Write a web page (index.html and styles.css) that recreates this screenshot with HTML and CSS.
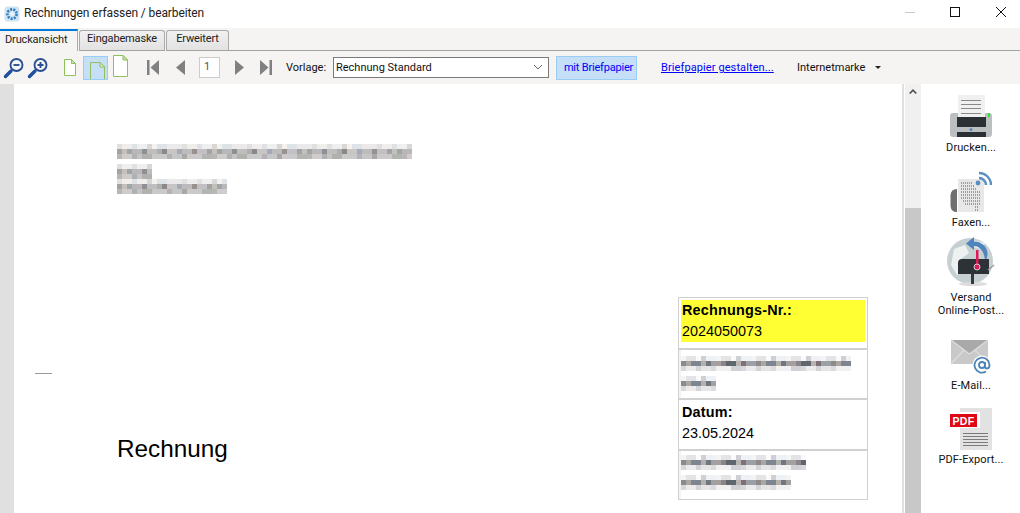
FILE: index.html
```html
<!DOCTYPE html>
<html lang="de">
<head>
<meta charset="utf-8">
<title>Rechnungen erfassen / bearbeiten</title>
<link rel="stylesheet" href="styles.css">
</head>
<body>
<div class="app">
  <header class="titlebar">
    <svg class="app-icon" viewBox="0 0 16 16" width="16" height="16">
      <rect x="0.5" y="0.5" width="15" height="15" rx="3" fill="#cfe3f2"/>
      <circle cx="8" cy="8" r="4.6" fill="none" stroke="#2f7fc0" stroke-width="2.6" stroke-dasharray="2 1.2"/>
      <circle cx="8" cy="8" r="2" fill="#eaf4fb"/>
    </svg>
    <span class="title-text">Rechnungen erfassen / bearbeiten</span>
    <div class="win-controls">
      <svg class="win-min" viewBox="0 0 10 10" width="10" height="10"><path d="M0 5.5H10" stroke="#c8c8c8" fill="none"/></svg>
      <svg class="win-max" viewBox="0 0 10 10" width="10" height="10"><rect x="0.5" y="0.5" width="9" height="9" fill="none" stroke="#111"/></svg>
      <svg class="win-close" viewBox="0 0 10 10" width="10" height="10"><path d="M0 0L10 10M10 0L0 10" stroke="#111" fill="none"/></svg>
    </div>
  </header>

  <nav class="tabs">
    <div class="tab tab-active">Druckansicht</div>
    <div class="tab tab-second">Eingabemaske</div>
    <div class="tab tab-third">Erweitert</div>
    <div class="tab-rest"></div>
  </nav>

  <div class="toolbar">
    <svg class="t-zoomout" viewBox="0 0 22 22" width="22" height="22">
      <path d="M2.500 19.500L8 14" stroke="#1f4f9e" stroke-width="3.400" stroke-linecap="round"/>
      <circle cx="13.500" cy="8" r="6" fill="#f4f6fa" stroke="#2a4f91" stroke-width="1.900"/>
      <path d="M10.500 8H16.500" stroke="#2a4f91" stroke-width="1.900"/>
    </svg>
    <svg class="t-zoomin" viewBox="0 0 22 22" width="22" height="22">
      <path d="M2.500 19.500L8 14" stroke="#1f4f9e" stroke-width="3.400" stroke-linecap="round"/>
      <circle cx="13.500" cy="8" r="6" fill="#f4f6fa" stroke="#2a4f91" stroke-width="1.900"/>
      <path d="M10.500 8H16.500M13.500 5V11" stroke="#2a4f91" stroke-width="1.900"/>
    </svg>
    <svg class="t-page1" viewBox="0 0 12 17" width="12" height="17">
      <path d="M0.500 0.500H7.500L11.500 4.500V16.500H0.500Z" fill="#fff" stroke="#8fc05c"/>
      <path d="M7.500 0.500V4.500H11.500Z" fill="#cfe3b4" stroke="#8fc05c"/>
    </svg>
    <div class="t-pagebtn">
      <svg viewBox="0 0 15 19" width="15" height="19">
        <path d="M0.500 19V0.500H10L14.500 5V19" fill="#c5dff6" stroke="#8fc05c"/>
        <path d="M10 0.500V5H14.500Z" fill="#e4eccf" stroke="#8fc05c"/>
      </svg>
    </div>
    <svg class="t-page3" viewBox="0 0 15 22" width="15" height="22">
      <path d="M0.500 0.500H10L14.500 5V21.500H0.500Z" fill="#fff" stroke="#8fc05c"/>
      <path d="M10 0.500V5H14.500Z" fill="#cfe3b4" stroke="#8fc05c"/>
    </svg>
    <svg class="t-first" viewBox="0 0 12 15" width="12" height="15"><path d="M0 0H2.500V15H0ZM12 0V15L3.500 7.500Z" fill="#808080"/></svg>
    <svg class="t-prev" viewBox="0 0 9 15" width="9" height="15"><path d="M9 0V15L0 7.500Z" fill="#808080"/></svg>
    <div class="t-input">1</div>
    <svg class="t-next" viewBox="0 0 9 15" width="9" height="15"><path d="M0 0V15L9 7.500Z" fill="#808080"/></svg>
    <svg class="t-last" viewBox="0 0 12 15" width="12" height="15"><path d="M0 0V15L8.500 7.500ZM9.500 0H12V15H9.500Z" fill="#808080"/></svg>
    <span class="t-label">Vorlage:</span>
    <div class="t-select">
      <span>Rechnung Standard</span>
      <svg viewBox="0 0 10 6" width="10" height="6"><path d="M1 1L5 5L9 1" fill="none" stroke="#666"/></svg>
    </div>
    <div class="t-btn">mit Briefpapier</div>
    <a class="t-link" href="#">Briefpapier gestalten...</a>
    <span class="t-menu">Internetmarke</span>
    <svg class="t-caret" viewBox="0 0 6 3" width="6" height="3"><path d="M0 0H6L3 3Z" fill="#222"/></svg>
  </div>

  <main class="main">
    <div class="gutter"></div>
    <section class="page">
      <div class="letter">
        <div class="address">
          <div class="blur w295"></div>
          <div class="blur w35 gap5"></div>
          <div class="blur w110"></div>
        </div>
        <div class="fold"></div>
        <h1 class="doc-title">Rechnung</h1>
      </div>
      <div class="meta">
        <div class="meta-row">
          <div class="meta-hl"><b>Rechnungs-Nr.:</b><br>2024050073</div>
        </div>
        <div class="meta-row meta-blur">
          <div class="blur dark w170"></div>
          <div class="blur dark w35 gap5"></div>
        </div>
        <div class="meta-row meta-date"><b>Datum:</b><br>23.05.2024</div>
        <div class="meta-row meta-blur meta-blur-last">
          <div class="blur dark w125"></div>
          <div class="blur dark w110 gap5"></div>
        </div>
      </div>
    </section>
    <div class="divider"></div>
    <div class="scrollbar">
      <svg viewBox="0 0 8 5" width="8" height="5"><path d="M0.700 4.500L4 1.200L7.300 4.500" fill="none" stroke="#505050" stroke-width="1.600"/></svg>
      <div class="thumb"></div>
    </div>
    <aside class="side">
      <div class="side-item item-print">
        <svg viewBox="0 0 42 44" width="42" height="44">
          <rect x="8" y="1" width="27" height="23" fill="#f0f0f0"/>
          <path d="M11 6.500H31M11 10.500H31M11 14.500H31M11 19.500H31" stroke="#8a8a8a"/>
          <path d="M3 19H8V24H35V19H39Q42 19 42 22V40Q42 43 39 43H3Q0 43 0 40V22Q0 19 3 19Z" fill="#bcbfc0"/>
          <rect x="7" y="23" width="29" height="10" fill="#2b3034"/>
          <rect x="38" y="19" width="2" height="4" fill="#2ee62e"/>
          <rect x="7" y="38" width="29" height="5" fill="#2b3034"/>
          <circle cx="21" cy="35.500" r="1.500" fill="#5a86b5"/>
        </svg>
        <span>Drucken...</span>
      </div>
      <div class="side-item item-fax">
        <svg viewBox="0 0 42 43" width="42" height="43">
          <rect x="8" y="9" width="26" height="33" fill="#e8e8e8"/>
          <path d="M7 19Q1 19 0.500 25V36Q1 42 7 42Z" fill="#6e6e6e"/>
          <path d="M11 13H22M11 16H24M11 19H26M11 22H31M11 25H31M11 28H31M13 31H31M15 34H31M25 37H29M25 40H28" stroke="#555" stroke-dasharray="1 1" fill="none"/>
          <circle cx="28" cy="13" r="2.400" fill="#5a8dc0"/>
          <path d="M28 7A7 7 0 0 1 35 14M28 2A12 12 0 0 1 40 14" transform="translate(1 1)" fill="none" stroke="#5a8dc0" stroke-width="2.400"/>
        </svg>
        <span>Faxen...</span>
      </div>
      <div class="side-item item-post">
        <svg viewBox="0 0 48 50" width="48" height="50">
          <circle cx="23" cy="24" r="23" fill="#c6d0d2"/>
          <path d="M7 12L18 8L22 16L14 22L18 32L10 38L4 28Z" fill="#eef1f1"/>
          <path d="M24 3L38 6L34 12L26 10Z" fill="#eef1f1"/>
          <path d="M38 25C38 14 32 9 27 9V13L19 6.500L27 0V4.500C36 4.500 45 13 38 25Z" fill="#4f84bd"/>
          <ellipse cx="26" cy="47" rx="14" ry="2" fill="#dcdcdc"/>
          <rect x="24" y="37" width="3" height="10" fill="#333a3e"/>
          <path d="M11 26Q11 22 15 22H42V37H11Z" fill="#2d3236"/>
          <path d="M41 33L47 28" stroke="#9a9a9a" stroke-width="1.500"/>
          <rect x="29" y="13" width="2.500" height="15" fill="#e0185a"/>
          <circle cx="30" cy="30" r="3" fill="#e0185a" stroke="#d0d0d0"/>
        </svg>
        <span>Versand<br>Online-Post...</span>
      </div>
      <div class="side-item item-mail">
        <svg viewBox="0 0 42 36" width="42" height="36">
          <rect x="1" y="1" width="37" height="24" fill="#c9c9c9"/>
          <path d="M1 1L19.500 15L38 1Z" fill="#a9a9a9"/>
          <path d="M1 1L19.500 15L38 1M1 25L14 11M38 25L25 11" fill="none" stroke="#dedede" stroke-width="1.200"/>
          <circle cx="32" cy="26" r="9.500" fill="#fff"/>
          <circle cx="32" cy="26" r="3" fill="none" stroke="#4d84b8" stroke-width="1.800"/>
          <path d="M35 23V27.500Q35 29.500 37 29.500Q39.500 29.500 39.500 26A7.500 7.500 0 1 0 36 32.500" fill="none" stroke="#4d84b8" stroke-width="1.800"/>
        </svg>
        <span>E-Mail...</span>
      </div>
      <div class="side-item item-pdf">
        <svg viewBox="0 0 42 43" width="42" height="43">
          <rect x="10" y="1" width="32" height="42" fill="#e2e2e2"/>
          <rect x="0" y="5" width="30" height="16" fill="#fff"/>
          <rect x="0" y="7" width="27" height="13" fill="#e00814"/>
          <text x="13.500" y="17.500" class="pdf-text" text-anchor="middle">PDF</text>
          <path d="M13 26.500H38M13 29.500H38M13 32.500H38M13 35.500H38M13 38.500H38" stroke="#7b7b7b"/>
        </svg>
        <span>PDF-Export...</span>
      </div>
    </aside>
  </main>
</div>
</body>
</html>
```

FILE: styles.css
```css
* { box-sizing: border-box; }
html, body { margin: 0; padding: 0; }
body {
  width: 1020px;
  height: 513px;
  overflow: hidden;
  background: #fff;
  font-family: Roboto, "Liberation Sans", sans-serif;
  font-size: 11px;
  color: #111;
}
.app { display: flex; flex-direction: column; height: 513px; }

/* title bar */
.titlebar { display: flex; align-items: center; height: 28px; padding-left: 4px; flex: none; background: #fff; }
.app-icon { flex: none; margin-top: -1px; }
.title-text { margin-left: 4px; font-size: 12px; letter-spacing: -.1px; margin-top: -2px; color: #222; }
.win-controls { display: flex; margin-left: auto; margin-top: -4px; }
.win-controls svg { display: block; }
.win-min { margin-right: 35px; }
.win-max { margin-right: 36px; }
.win-close { margin-right: 14px; }

/* tabs */
.tabs { display: flex; align-items: flex-end; height: 23px; flex: none; background: #f5f4f2; }
.tab {
  height: 20px;
  margin-bottom: 1px;
  padding-top: 1px;
  text-align: center;
  font-size: 11px;
  letter-spacing: -.15px;
  color: #222;
  border: 1px solid #aaa;
  border-bottom: 0;
  border-radius: 3px 3px 0 0;
  background: linear-gradient(#f1f1f1, #e2e2e2);
}
.tab-active {
  width: 78px;
  height: 22px;
  margin-bottom: 0;
  padding: 2px 0 0 5px;
  text-align: left;
  border: 0;
  border-top: 2px solid #0078d7;
  border-right: 1px solid #aaa;
  border-radius: 0;
  background: #f5f4f2;
}
.tab-second { width: 86px; margin-left: 1px; }
.tab-third { width: 63px; margin-left: 1px; }
.tab-rest { flex: 1; align-self: flex-end; height: 1px; background: #a3a3a3; }
.tab-second, .tab-third { box-shadow: 0 1px 0 #a3a3a3; }

/* toolbar */
.toolbar { display: flex; align-items: center; height: 33px; flex: none; background: #f5f4f2; font-size: 11px; }
.toolbar > svg { flex: none; display: block; }
.t-zoomout { margin-left: 3px; }
.t-zoomin { margin-left: 2px; }
.t-page1 { margin-left: 15px; }
.t-pagebtn {
  width: 25px; height: 24px; margin-left: 7px; flex: none;
  background: #c5dff6; border: 1px solid #99cdf5;
  padding: 5px 0 0 6px; overflow: hidden;
}
.t-pagebtn svg { display: block; }
.t-page3 { margin-left: 5px; margin-top: -3px; }
.t-first { margin-left: 19px; }
.t-prev { margin-left: 17px; }
.t-input {
  width: 21px; height: 21px; margin-left: 14px; flex: none;
  background: #fff; border: 1px solid #ccc;
  padding: 2px 0 0 4px; color: #555;
}
.t-next { margin-left: 15px; }
.t-last { margin-left: 16px; }
.t-label { width: 40px; margin-left: 14px; flex: none; white-space: nowrap; }
.t-select {
  display: flex; align-items: center; justify-content: space-between;
  width: 216px; height: 21px; margin-left: 7px; flex: none;
  background: #fff; border: 1px solid #7a7a7a;
  padding: 0 5px 1px 2px;
}
.t-btn {
  width: 81px; height: 24px; margin-left: 7px; flex: none;
  background: #c5dff6; border: 1px solid #99cdf5;
  color: #0000ff; text-align: center; line-height: 22px;
  letter-spacing: -.2px; padding-left: 4px;
}
.t-link { width: 112px; margin-left: 24px; flex: none; color: #0000ff; text-decoration: underline; white-space: nowrap; letter-spacing: .1px; }
.t-menu { width: 69px; margin-left: 24px; flex: none; white-space: nowrap; }
.t-caret { margin-left: 9px; }

/* main */
.main { display: flex; flex: 1; min-height: 0; }
.gutter { width: 14px; flex: none; background: #e0e0e0; }
.page {
  display: flex; width: 888px; flex: none; background: #fff;
  font-family: "Liberation Sans", Arial, sans-serif; color: #000;
}
.letter { flex: 1; padding: 60px 0 0 21px; }
.address { padding-left: 82px; }
.fold { width: 17px; height: 1px; margin-top: 179px; background: #999; }
.doc-title { margin: 61px 0 0 82px; font-size: 24.300px; font-weight: 400; line-height: 28px; }

.blur {
  height: 15px;
  background-color: #eee;
  background-image:
    repeating-linear-gradient(90deg, #b9b6b6 0 5px, #cfcccb 5px 15px, #aeb2b3 15px 20px, #c6c3c5 20px 25px, #b0b3ad 25px 35px, #c9c9c9 35px 50px, #b6b1b4 50px 55px, #c4c6c8 55px 65px, #a9a8a6 65px 70px, #ccc9ca 70px 85px, #b3b6b0 85px 95px),
    repeating-linear-gradient(90deg, #a3a3a3 0 5px, #c4c1bd 5px 10px, #9fa6a6 10px 15px, #bab7ba 15px 25px, #8f9094 25px 30px, #c0bdbf 30px 40px, #aab0ae 40px 45px, #8c8788 45px 50px, #c8c6c4 50px 60px, #a6a9b8 60px 65px, #bdbcbc 65px 75px, #98918f 75px 80px, #c2c0c4 80px 90px),
    repeating-linear-gradient(90deg, #e0e0e0 0 5px, #f0eeea 5px 15px, #dfe2e4 15px 20px, #efefef 20px 30px, #d9d7d6 30px 35px, #f4f2ee 35px 40px, #dde3e6 40px 50px, #ebe9e9 50px 65px);
  background-size: 100% 5px;
  background-position: 0 10px, 0 5px, 0 0;
  background-repeat: no-repeat;
}
.blur.dark {
  background-image:
    repeating-linear-gradient(90deg, #d8d8dc 0 5px, #eceaea 5px 15px, #d2d4d8 15px 20px, #e6e4e4 20px 30px, #dbdade 30px 35px, #f2f0f0 35px 50px, #cfd1d6 50px 60px),
    repeating-linear-gradient(90deg, #8c8a8c 0 5px, #aaa6a2 5px 10px, #7c8590 10px 20px, #b4b0ac 20px 25px, #6f7880 25px 30px, #a5a0a0 30px 40px, #8a8688 40px 45px, #5f666e 45px 55px, #b8b4b0 55px 60px, #7f6f76 60px 65px, #9aa0a6 65px 75px),
    repeating-linear-gradient(90deg, #f4f4f4 0 5px, #e4e4e6 5px 15px, #fafafa 15px 20px, #d0d0d4 20px 25px, #eef2f6 25px 35px);
}
.gap5 { margin-top: 5px; }
.w295 { width: 295px; }
.w170 { width: 170px; }
.w125 { width: 125px; }
.w110 { width: 110px; }
.w35 { width: 35px; }

.meta {
  display: grid; grid-template-rows: repeat(4, 50.500px);
  width: 190px; height: 202px; margin: 213px 34px 0 0; flex: none;
  font-size: 14.400px; line-height: 21px;
}
.meta b { letter-spacing: .2px; }
.meta-row { border: 1px solid #d0d0d0; margin-bottom: -1px; padding: 2px; }
.meta-row + .meta-row { border-top-width: 2px; }
.meta-hl { height: 42px; background: #ffff33; padding: 0 1px; }
.meta-blur { padding: 6px 0 0 2px; background: linear-gradient(90deg, #f3f3f3 2px, #fff 2px); }
.meta-blur-last { padding-top: 4px; }
.meta-date { padding: 2px 3px; }

/* scrollbar */
.divider { width: 3px; flex: none; background: linear-gradient(90deg, #e0e0e0 2px, #fff 2px); }
.scrollbar { width: 16px; flex: none; background: #f0f0f0; padding-top: 5px; display: flex; flex-direction: column; align-items: center; }
.scrollbar svg { display: block; flex: none; }
.thumb { width: 16px; flex: 1; margin-top: 114px; background: #c8c8c8; }

/* side panel */
.side { width: 99px; flex: none; padding-left: 1px; background: #fff; display: flex; flex-direction: column; align-items: center; font-size: 11px; line-height: 13px; color: #111; }
.side-item { display: flex; flex-direction: column; align-items: center; text-align: center; white-space: nowrap; }
.side-item svg { display: block; }
.side-item span { margin-top: 3px; letter-spacing: .1px; }
.item-print { margin-top: 10px; }
.item-fax { margin-top: 16px; }
.item-post { margin-top: 8px; }
.item-post span { margin-top: 4px; }
.item-mail { margin-top: 22px; }
.item-mail span { margin-top: 4px; }
.item-pdf { margin-top: 15px; }
.pdf-text { font-family: "Liberation Sans", Arial, sans-serif; font-size: 10.500px; font-weight: 700; fill: #fff; letter-spacing: .3px; }
```
